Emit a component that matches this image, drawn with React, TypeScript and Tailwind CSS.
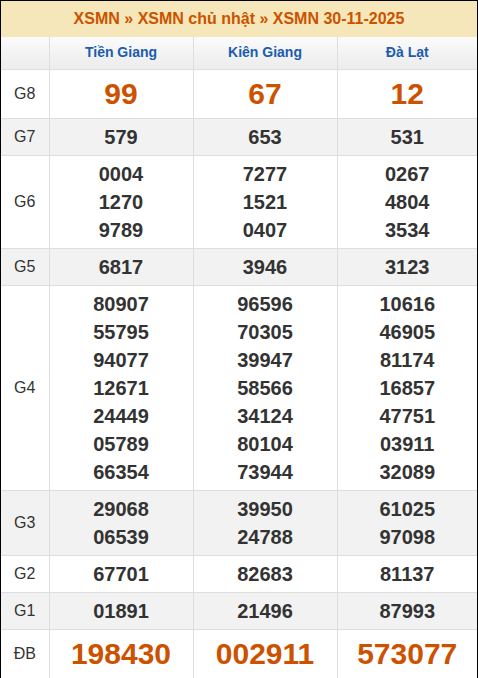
const provinces = ['Tiền Giang', 'Kiên Giang', 'Đà Lạt'];

type Prize = {
  label: string;
  values: string[][];
  big?: boolean;
};

const prizes: Prize[] = [
  { label: 'G8', values: [['99'], ['67'], ['12']], big: true },
  { label: 'G7', values: [['579'], ['653'], ['531']] },
  {
    label: 'G6',
    values: [
      ['0004', '1270', '9789'],
      ['7277', '1521', '0407'],
      ['0267', '4804', '3534'],
    ],
  },
  { label: 'G5', values: [['6817'], ['3946'], ['3123']] },
  {
    label: 'G4',
    values: [
      ['80907', '55795', '94077', '12671', '24449', '05789', '66354'],
      ['96596', '70305', '39947', '58566', '34124', '80104', '73944'],
      ['10616', '46905', '81174', '16857', '47751', '03911', '32089'],
    ],
  },
  {
    label: 'G3',
    values: [
      ['29068', '06539'],
      ['39950', '24788'],
      ['61025', '97098'],
    ],
  },
  { label: 'G2', values: [['67701'], ['82683'], ['81137']] },
  { label: 'G1', values: [['01891'], ['21496'], ['87993']] },
  { label: 'ĐB', values: [['198430'], ['002911'], ['573077']], big: true },
];

const App = () => {
  return (
    <div className="w-[478px] h-[678px] bg-white font-[Liberation_Sans,Arial,sans-serif]">
      <div className="border border-black">
        <div className="h-[36px] bg-[#f5e7b9] flex items-center justify-center text-[16px] font-bold text-[#cc5200]">
          XSMN » XSMN chủ nhật » XSMN 30-11-2025
        </div>
        <table className="w-full table-fixed border-collapse">
          <colgroup>
            <col className="w-[48px]" />
            <col className="w-[144px]" />
            <col className="w-[144px]" />
            <col />
          </colgroup>
          <thead>
            <tr className="h-[32px] bg-gradient-to-b from-[#fbfbfb] to-[#ececec]">
              <th className="border-r border-b border-[#dedede]" />
              {provinces.map((p, i) => (
                <th
                  key={p}
                  className={`border-b border-[#dedede] text-[14px] font-bold text-[#1b5cb0] ${
                    i < 2 ? 'border-r' : ''
                  }`}
                >
                  {p}
                </th>
              ))}
            </tr>
          </thead>
          <tbody>
            {prizes.map((row, r) => (
              <tr
                key={row.label}
                className={r % 2 === 1 ? 'bg-[#f2f2f2]' : 'bg-white'}
              >
                <td
                  className={`text-center text-[16px] text-[#333] border-r border-[#dedede] ${
                    r < prizes.length - 1 ? 'border-b' : ''
                  }`}
                >
                  {row.label}
                </td>
                {row.values.map((vals, c) => (
                  <td
                    key={c}
                    className={`text-center font-bold py-[4px] border-[#dedede] ${
                      c < 2 ? 'border-r' : ''
                    } ${r < prizes.length - 1 ? 'border-b' : ''} ${
                      row.big
                        ? 'text-[30px] leading-[40px] text-[#cc5200]'
                        : 'text-[20px] leading-[28px] text-[#333]'
                    }`}
                  >
                    {vals.map((v) => (
                      <div key={v}>{v}</div>
                    ))}
                  </td>
                ))}
              </tr>
            ))}
          </tbody>
        </table>
      </div>
    </div>
  );
};

export default App;
